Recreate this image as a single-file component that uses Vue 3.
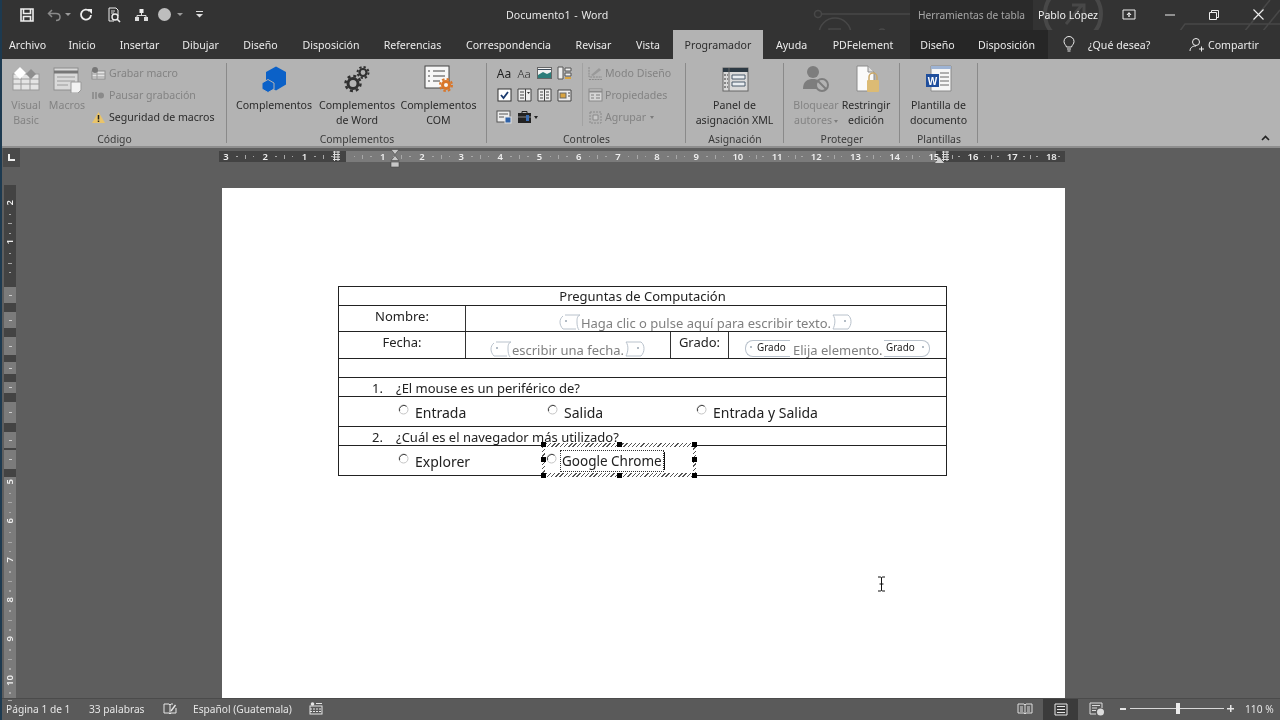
<template>
  <div class="word">
    <!-- shared shapes -->
    <svg class="defs" width="0" height="0">
      <symbol id="tag-left" viewBox="0 0 24 18">
        <path d="M8 2H23C20 3 20 6 20 9s.5 6 2 8M6 3C2 6 2 12 6 16H19" fill="none" stroke="#b9c2cc" stroke-width="1" />
        <circle cx="9" cy="8" r="1" fill="#9aa6b2" />
      </symbol>
      <symbol id="tag-right" viewBox="0 0 24 18">
        <path d="M2 2H17C21 5 21 12 17 16H2C4 12 5 6 2 2Z" fill="none" stroke="#b9c2cc" stroke-width="1" />
        <circle cx="14" cy="8" r="1" fill="#9aa6b2" />
      </symbol>
      <symbol id="radio" viewBox="0 0 11 11">
        <circle cx="5.5" cy="5.5" r="4.5" fill="#fff" stroke="#c4c4c4" />
        <path d="M1.6 7.2A4.5 4.5 0 0 1 8.6 2.3" fill="none" stroke="#444" />
      </symbol>
    </svg>

    <header class="titlebar">
      <svg class="circuit" width="1280" height="59" viewBox="0 0 1280 59">
        <g fill="none" stroke="#484848" stroke-width="1.5">
          <circle cx="818" cy="14" r="3.5" />
          <path d="M822 14H910" />
          <circle cx="835" cy="34" r="16" />
          <path d="M829 40V29H841" />
          <circle cx="882" cy="32" r="3" />
          <path d="M885 32H910" />
          <circle cx="1073" cy="14" r="28" stroke-width="4" />
          <path d="M1066 24L1082 5M1072 5H1084V16" stroke-width="3" />
          <path d="M1160 58L1185 24H1280M1222 59L1270 0M1240 59L1280 10" />
        </g>
      </svg>
      <div class="qat">
        <svg width="14" height="14" viewBox="0 0 14 14"><path d="M1 1H13V13H1Z M3.5 1V5.5H10.5V1 M3.5 13V8.5H10.5V13" fill="none" stroke="#eee" stroke-width="1.6" /></svg>
        <svg class="q-undo" width="15" height="14" viewBox="0 0 15 14"><path d="M5 2L1.5 5.5 5 9M2 5.5H9C12 5.5 13 7.5 13 9S12 12.5 9 12.5" fill="none" stroke="#8a8a8a" stroke-width="1.5" /></svg>
        <span class="q-arrow"></span>
        <svg class="q-redo" width="14" height="14" viewBox="0 0 14 14"><path d="M10.5 3A5 5 0 1 0 12 7" fill="none" stroke="#eee" stroke-width="1.8" /><path d="M8 1H13V6Z" fill="#eee" /></svg>
        <svg class="q-prev" width="14" height="16" viewBox="0 0 14 16"><path d="M2 1H9L11 3V9M2 1V14H7" fill="none" stroke="#eee" /><circle cx="8" cy="10" r="3" fill="none" stroke="#eee" stroke-width="1.4" /><path d="M10 12L13 15" stroke="#eee" stroke-width="1.6" /><path d="M4 4H8M4 6H7" stroke="#ddd" /></svg>
        <svg class="q-tree" width="15" height="14" viewBox="0 0 15 14"><path d="M7.5 4V7M3 10V7.5H12V10" fill="none" stroke="#ddd" /><rect x="5.5" y="1" width="4" height="4" fill="#eee" /><rect x="1" y="9" width="4" height="4" fill="#ddd" /><rect x="10" y="9" width="4" height="4" fill="#ddd" /></svg>
        <span class="q-dot"></span>
        <span class="q-arrow"></span>
        <svg class="q-more" width="7" height="7" viewBox="0 0 7 7"><path d="M0 .5H7" stroke="#ddd" /><path d="M0 3H7L3.5 6.5Z" fill="#ddd" /></svg>
      </div>
      <div class="doc-title">Documento1 - Word</div>
      <div class="tools-label">Herramientas de tabla</div>
      <div class="user">Pablo López</div>
      <svg class="win-display" width="14" height="11" viewBox="0 0 14 11"><path d="M1 1H13V10H1Z" fill="none" stroke="#eee" /><path d="M7 3L4.5 6H9.5ZM6.3 5.5H7.7V8H6.3Z" fill="#eee" /></svg>
      <span class="win-btn"><svg width="10" height="10" viewBox="0 0 10 10"><path d="M0 5H10" stroke="#eee" /></svg></span>
      <span class="win-btn"><svg width="10" height="10" viewBox="0 0 10 10"><path d="M.5 2.5H7.5V9.5H.5ZM2.5 2.5V.5H9.5V7.5H7.5" fill="none" stroke="#eee" /></svg></span>
      <span class="win-btn"><svg width="11" height="11" viewBox="0 0 11 11"><path d="M.5 .5L10.5 10.5M10.5 .5L.5 10.5" stroke="#eee" stroke-width="1.1" /></svg></span>
    </header>

    <nav class="tabs">
      <span
        v-for="t in tabs"
        :key="t.name + t.w"
        class="tab"
        :class="{ active: t.active, tool: t.tool }"
        :style="{ width: t.w + 'px' }"
      >{{ t.name }}</span>
      <span class="tell">
        <svg width="12" height="17" viewBox="0 0 12 17"><path d="M3.5 11C3 9 1 8 1 5.5a5 5 0 0 1 10 0C11 8 9 9 8.5 11ZM4 13H8M4.5 15H7.5" fill="none" stroke="#eee" /></svg>
        <span>¿Qué desea?</span>
      </span>
      <span class="share">
        <svg width="15" height="15" viewBox="0 0 15 15"><circle cx="7" cy="5" r="3.5" fill="none" stroke="#eee" /><path d="M1 14C1 11 3 9 7 9M10 12H15M12.5 9.5V14.5" fill="none" stroke="#eee" /></svg>
        <span>Compartir</span>
      </span>
    </nav>

    <section class="ribbon">
      <div class="group g-codigo">
        <div class="g-body">
          <div class="big off w-vb">
            <svg class="ic" width="30" height="26" viewBox="0 0 30 26">
              <rect x="2" y="8" width="26" height="16" fill="#e4e4e4" stroke="#9a9a9a" />
              <path d="M2 13H28M2 18H28M10 8V24M19 8V24" stroke="#9a9a9a" />
              <path d="M9 1L15 7 9 13 3 7Z" fill="#fff" />
              <path d="M20 3L25 8 20 13 15 8Z" fill="#8e8e8e" />
            </svg>
            <span>Visual</span><span>Basic</span>
          </div>
          <div class="big off w-mac">
            <svg class="ic" width="30" height="26" viewBox="0 0 30 26">
              <rect x="2" y="2" width="24" height="22" fill="#d9d9d9" stroke="#8e8e8e" />
              <path d="M2 6H26" stroke="#777" stroke-width="3" />
              <path d="M5 11H23M5 15H23M5 19H16" stroke="#9a9a9a" />
              <path d="M19 16H29V24L26 27H19Z" fill="#f2f2f2" stroke="#999" />
            </svg>
            <span>Macros</span>
          </div>
          <div class="small-col">
            <div class="small off">
              <svg width="15" height="13" viewBox="0 0 15 13"><rect x="1" y="4" width="13" height="8" fill="#e4e4e4" stroke="#8e8e8e" /><path d="M1 7H14M1 10H14M6 4V12" stroke="#999" /><circle cx="4" cy="3" r="3" fill="#777" /></svg>
              <span>Grabar macro</span>
            </div>
            <div class="small off">
              <svg width="15" height="13" viewBox="0 0 15 13"><path d="M2 3V10M5 3V10" stroke="#8a8a8a" stroke-width="1.6" /><circle cx="10" cy="6.5" r="3" fill="#8a8a8a" /></svg>
              <span>Pausar grabación</span>
            </div>
            <div class="small">
              <svg width="15" height="13" viewBox="0 0 15 13"><path d="M7.5 1L14 12H1Z" fill="#e9c46a" /><path d="M7.5 4V8.5M7.5 9.5V11" stroke="#222" stroke-width="1.5" /></svg>
              <span>Seguridad de macros</span>
            </div>
          </div>
        </div>
        <div class="g-label">Código</div>
      </div>

      <div class="group g-compl">
        <div class="g-body">
          <div class="big w-c1">
            <svg class="ic" width="28" height="27" viewBox="0 0 28 27">
              <path d="M16 1L26 6.5V19L16 25 6 19V6.5Z" fill="#0b61c8" />
              <path d="M8 14L14 17.5V23.5L8 27 2 23.5V17.5Z" fill="#0b61c8" stroke="#b3b3b3" />
            </svg>
            <span>Complementos</span>
          </div>
          <div class="big w-c2">
            <svg class="ic" width="28" height="27" viewBox="0 0 28 27">
              <g fill="none" stroke="#303030">
                <circle cx="10" cy="18" r="5" stroke-width="3" />
                <circle cx="10" cy="18" r="7.5" stroke-width="2.5" stroke-dasharray="3 2.9" />
                <circle cx="20" cy="7" r="3.5" stroke-width="2.2" />
                <circle cx="20" cy="7" r="5.5" stroke-width="2" stroke-dasharray="2.3 2" />
              </g>
            </svg>
            <span>Complementos</span><span>de Word</span>
          </div>
          <div class="big w-c3">
            <svg class="ic" width="30" height="28" viewBox="0 0 30 28">
              <rect x="1" y="1" width="24" height="22" fill="#f7f7f7" stroke="#444" />
              <path d="M4 6H6M9 6H21M4 11H6M9 11H21M4 16H6M9 16H16" stroke="#444" stroke-width="1.2" />
              <circle cx="22" cy="20" r="3.5" fill="none" stroke="#d9762a" stroke-width="3" />
              <circle cx="22" cy="20" r="6" fill="none" stroke="#d9762a" stroke-width="2" stroke-dasharray="2.5 2.2" />
            </svg>
            <span>Complementos</span><span>COM</span>
          </div>
        </div>
        <div class="g-label">Complementos</div>
      </div>

      <div class="group g-ctrl">
        <div class="g-body">
          <div class="ctrl-grid">
            <span class="aa">Aa</span>
            <span class="aa thin">Aa</span>
            <svg width="15" height="12" viewBox="0 0 15 12"><rect x=".5" y=".5" width="14" height="11" fill="#f2f2f2" stroke="#666" /><path d="M1 8L6 5 10 7 14 5V11H1Z" fill="#2c7d7a" /><path d="M1 2.5H14" stroke="#3b4b5a" /></svg>
            <svg width="15" height="14" viewBox="0 0 15 14"><path d="M1 1H6V13H1ZM8 2H14V5H8ZM8 7H14V10H8Z" fill="#eee" stroke="#555" /><path d="M8 11H14V13H8Z" fill="#d9a441" /></svg>
            <svg width="15" height="14" viewBox="0 0 15 14"><rect x="1" y="1" width="13" height="12" fill="#fff" stroke="#333" /><path d="M4 7L6.5 10 11 4" fill="none" stroke="#1b3b6f" stroke-width="1.8" /></svg>
            <svg width="15" height="14" viewBox="0 0 15 14"><path d="M1 1H14V13H1Z" fill="#eee" stroke="#444" /><path d="M3 4H7M3 7H7M3 10H7M8.5 1V13" stroke="#444" /><path d="M10 4H13L11.5 6Z" fill="#333" /></svg>
            <svg width="15" height="14" viewBox="0 0 15 14"><path d="M1 1H14V13H1Z" fill="#eee" stroke="#444" /><path d="M3 4H6M3 7H6M3 10H6M9 4H12M9 7H12M9 10H12M7.5 1V13" stroke="#444" /></svg>
            <svg width="15" height="14" viewBox="0 0 15 14"><path d="M1 2H14V13H1Z" fill="#eee" stroke="#444" /><rect x="3" y="5" width="6" height="5" fill="#d9a441" stroke="#666" /><path d="M11 5H13M11 8H13" stroke="#444" /></svg>
            <svg width="16" height="14" viewBox="0 0 16 14"><rect x="1" y="1" width="13" height="11" fill="#eee" stroke="#555" /><path d="M3 4H12M3 7H8" stroke="#555" /><rect x="9" y="7" width="6" height="6" fill="#2f62a8" stroke="#e4e4e4" /></svg>
            <svg width="15" height="14" viewBox="0 0 15 14"><path d="M5 3V1.5H10V3" fill="none" stroke="#222" /><rect x="1" y="3" width="13" height="10" fill="#222" /><path d="M1 7H14" stroke="#888" /><rect x="9" y="5" width="3" height="6" fill="#3a6db3" /></svg>
            <span class="drop-arrow"></span>
          </div>
          <div class="small-col ctrl-side">
            <div class="small off">
              <svg width="15" height="15" viewBox="0 0 15 15"><path d="M1 1V11H14M1 13.5H14" fill="none" stroke="#8a8a8a" stroke-dasharray="2 .8" /><path d="M3 9L11 2 13 4 5 10Z" fill="#999" /></svg>
              <span>Modo Diseño</span>
            </div>
            <div class="small off">
              <svg width="15" height="14" viewBox="0 0 15 14"><rect x="1" y="1" width="13" height="12" fill="#d6d6d6" stroke="#8a8a8a" /><path d="M1 3.5H14" stroke="#8a8a8a" stroke-width="2" /><path d="M3 7H6M3 10H6M8 7H12M8 10H12" stroke="#7d7d7d" /></svg>
              <span>Propiedades</span>
            </div>
            <div class="small off">
              <svg width="15" height="15" viewBox="0 0 15 15"><path d="M2 2H13V13H2Z" fill="none" stroke="#8a8a8a" stroke-dasharray="2 1" /><path d="M5 5H10V10H5Z" fill="#c8c8c8" stroke="#8a8a8a" /></svg>
              <span>Agrupar</span><span class="drop-arrow off-arrow"></span>
            </div>
          </div>
        </div>
        <div class="g-label">Controles</div>
      </div>

      <div class="group g-xml">
        <div class="g-body">
          <div class="big w-xml">
            <svg class="ic" width="28" height="26" viewBox="0 0 28 26">
              <rect x="2" y="2" width="25" height="23" fill="#d9d9d9" stroke="#666" />
              <path d="M2 4H27" stroke="#2d3a44" stroke-width="4" />
              <path d="M8 2V25" stroke="#666" />
              <path d="M3 9H7M3 13H7M3 17H7M3 21H7" stroke="#333" stroke-dasharray="2 1" />
              <path d="M11 9H24V13H11ZM11 16H24V20H11Z" fill="#e9edf1" stroke="#4a5a6a" />
            </svg>
            <span>Panel de</span><span>asignación XML</span>
          </div>
        </div>
        <div class="g-label">Asignación</div>
      </div>

      <div class="group g-prot">
        <div class="g-body">
          <div class="big off w-p1">
            <svg class="ic" width="30" height="28" viewBox="0 0 30 28">
              <circle cx="12" cy="7" r="6" fill="#7d7d7d" />
              <path d="M2 24C2 16 7 14 12 14S20 16 20 20L16 24Z" fill="#7d7d7d" />
              <circle cx="21" cy="20" r="6" fill="#b3b3b3" stroke="#7d7d7d" stroke-width="2" />
              <path d="M17 16L25 24" stroke="#7d7d7d" stroke-width="2" />
            </svg>
            <span>Bloquear</span><span>autores<i class="drop-arrow off-arrow"></i></span>
          </div>
          <div class="big w-p2">
            <svg class="ic" width="28" height="28" viewBox="0 0 28 28">
              <path d="M5 1H16L22 7V26H5Z" fill="#fafafa" stroke="#8a8a8a" />
              <path d="M16 1V7H22" fill="#ddd" stroke="#8a8a8a" />
              <path d="M17 15V12A4 4 0 0 1 25 12V15" fill="none" stroke="#caa868" stroke-width="1.5" />
              <rect x="15" y="15" width="12" height="12" rx="1" fill="#dcbb74" />
            </svg>
            <span>Restringir</span><span>edición</span>
          </div>
        </div>
        <div class="g-label">Proteger</div>
      </div>

      <div class="group g-plant">
        <div class="g-body">
          <div class="big w-pl">
            <svg class="ic" width="28" height="28" viewBox="0 0 28 28">
              <path d="M6 1H26V26H6Z" fill="#f5f5f5" stroke="#8a8a8a" />
              <path d="M6 1H26V4H6Z" fill="#9db3d4" />
              <path d="M15 8H24M15 12H24M15 16H24M15 20H24" stroke="#666" />
              <rect x="1" y="9" width="13" height="13" fill="#1f4e9c" />
              <text x="7.5" y="19.5" class="w-letter">W</text>
            </svg>
            <span>Plantilla de</span><span>documento</span>
          </div>
        </div>
        <div class="g-label">Plantillas</div>
      </div>

      <div class="ribbon-end">
        <svg width="9" height="6" viewBox="0 0 9 6"><path d="M1 5L4.5 1.5 8 5" fill="none" stroke="#222" stroke-width="1.6" /></svg>
      </div>
    </section>

    <main class="workspace">
      <div class="hruler-row">
        <div class="tab-box"><span class="tab-l"></span></div>
        <div class="hruler">
          <div v-for="(n, i) in hnums" :key="i" class="hcell">
            <b>{{ n }}</b><i></i><u></u><i></i>
          </div>
          <svg class="margin-mark left-mark" width="7" height="10" viewBox="0 0 7 10"><path d="M0 1H7M0 3.5H7M0 6H7M0 8.5H7M1.5 0V10M5 0V10" stroke="#ddd" /></svg>
          <svg class="margin-mark right-mark" width="7" height="10" viewBox="0 0 7 10"><path d="M0 1H7M0 3.5H7M0 6H7M0 8.5H7M1.5 0V10M5 0V10" stroke="#ddd" /></svg>
          <svg class="indent" width="10" height="19" viewBox="0 0 10 19"><path d="M1 .5H9L5 5.5ZM5 6.5L9 11.5H1Z" fill="#c8c8c8" stroke="#444" stroke-width=".6" /><rect x="1" y="13" width="8" height="5" fill="#c8c8c8" stroke="#444" stroke-width=".6" /></svg>
          <svg class="indent-r" width="9" height="6" viewBox="0 0 9 6"><path d="M4.5 0L9 6H0Z" fill="#d0d0d0" /></svg>
        </div>
      </div>

      <div class="doc-row">
        <div class="vruler">
          <div
            v-for="(s, i) in vsegs"
            :key="i"
            class="vseg"
            :class="{ light: s.light, numbered: s.nums }"
            :style="{ height: s.h + 'px' }"
          >
            <template v-if="s.nums">
              <div v-for="n in s.nums" :key="n" class="vcell">
                <b>{{ n }}</b><i></i><u></u><i></i>
              </div>
            </template>
            <u v-else-if="s.light"></u>
          </div>
        </div>

        <div class="page">
          <div class="table">
            <div class="row r18 center">Preguntas de Computación</div>
            <div class="row r26">
              <div class="cell label-cell">Nombre:</div>
              <div class="cell ph-cell">
                <svg class="tag"><use href="#tag-left" /></svg>
                <span class="ph">Haga clic o pulse aquí para escribir texto.</span>
                <svg class="tag"><use href="#tag-right" /></svg>
              </div>
            </div>
            <div class="row r27">
              <div class="cell label-cell">Fecha:</div>
              <div class="cell ph-cell date-cell">
                <svg class="tag"><use href="#tag-left" /></svg>
                <span class="ph">escribir una fecha.</span>
                <svg class="tag"><use href="#tag-right" /></svg>
              </div>
              <div class="cell label-cell grade-label">Grado:</div>
              <div class="cell ph-cell grade-cell">
                <span class="gtag left"><em>Grado</em></span>
                <span class="ph">Elija elemento.</span>
                <span class="gtag right"><em>Grado</em></span>
              </div>
            </div>
            <div class="row r19"></div>
            <div class="row r19 question"><span class="num">1.</span>¿El mouse es un periférico de?</div>
            <div class="row r30 options">
              <div class="opt"><svg class="radio"><use href="#radio" /></svg><span>Entrada</span></div>
              <div class="opt"><svg class="radio"><use href="#radio" /></svg><span>Salida</span></div>
              <div class="opt"><svg class="radio"><use href="#radio" /></svg><span>Entrada y Salida</span></div>
            </div>
            <div class="row r19 question"><span class="num">2.</span>¿Cuál es el navegador más utilizado?</div>
            <div class="row r30 options">
              <div class="opt"><svg class="radio"><use href="#radio" /></svg><span>Explorer</span></div>
            </div>

            <div class="selected">
              <div class="sel-inner">
                <svg class="radio"><use href="#radio" /></svg>
                <span class="sel-text">Google Chrome</span>
                <span class="caret"></span>
              </div>
              <span v-for="h in handles" :key="h" class="handle" :class="h"></span>
            </div>
          </div>
        </div>
      </div>

      <svg class="ibeam" width="9" height="16" viewBox="0 0 9 16"><path d="M1 1H3.5C4 1 4.5 1.5 4.5 2V14C4.5 14.5 4 15 3.5 15H1M8 1H5.5C5 1 4.5 1.5 4.5 2M4.5 14C4.5 14.5 5 15 5.5 15H8M2.5 8H6.5" fill="none" stroke="#111" /></svg>
    </main>

    <footer class="status">
      <span class="st-page">Página 1 de 1</span>
      <span class="st-words">33 palabras</span>
      <svg class="st-book" width="14" height="12" viewBox="0 0 14 12"><path d="M1 1H6L7 2V11L6 10H1ZM7 2L8 1H10M13 5V10H8L7 11" fill="none" stroke="#e6e6e6" /><path d="M8 8L12.5 2" stroke="#e6e6e6" stroke-width="1.4" /></svg>
      <span class="st-lang">Español (Guatemala)</span>
      <svg class="st-cal" width="14" height="13" viewBox="0 0 14 13"><rect x="1" y="4" width="12" height="8" fill="none" stroke="#e6e6e6" /><path d="M1 7H13M1 9.5H13" stroke="#e6e6e6" stroke-dasharray="2 1" /><circle cx="3.5" cy="2" r="1.8" fill="#e6e6e6" /><path d="M7 1.5H13" stroke="#e6e6e6" /></svg>
      <span class="st-spacer"></span>
      <svg class="st-read" width="16" height="13" viewBox="0 0 16 13"><path d="M1 2H7L8 3 9 2H15V11H9L8 12 7 11H1ZM8 3V12M3 5H6M3 7H6M3 9H6M10 5H13M10 7H13M10 9H13" fill="none" stroke="#dcdcdc" /></svg>
      <span class="st-active">
        <svg width="14" height="13" viewBox="0 0 14 13"><path d="M1 1H13V12H1ZM3 3.5H11M3 6.5H11M3 9.5H11" fill="none" stroke="#e6e6e6" /></svg>
      </span>
      <svg class="st-web" width="16" height="14" viewBox="0 0 16 14"><path d="M1 1H13V6M1 1V12H7M3 3.5H11M3 6H8M3 8.5H7" fill="none" stroke="#dcdcdc" /><circle cx="11.5" cy="10" r="3.5" fill="#dcdcdc" /></svg>
      <span class="zoom-minus"></span>
      <span class="slider"><span class="thumb"></span></span>
      <span class="zoom-plus"></span>
      <span class="st-zoom">110 %</span>
    </footer>
  </div>
</template>

<script setup>
const tabs = [
  { name: 'Archivo', w: 55 },
  { name: 'Inicio', w: 54 },
  { name: 'Insertar', w: 61 },
  { name: 'Dibujar', w: 61 },
  { name: 'Diseño', w: 59 },
  { name: 'Disposición', w: 82 },
  { name: 'Referencias', w: 81 },
  { name: 'Correspondencia', w: 111 },
  { name: 'Revisar', w: 59 },
  { name: 'Vista', w: 50 },
  { name: 'Programador', w: 90, active: true },
  { name: 'Ayuda', w: 57 },
  { name: 'PDFelement', w: 86 },
  { name: '', w: 4 },
  { name: 'Diseño', w: 55, tool: true },
  { name: 'Disposición', w: 83, tool: true }
]

const hnums = [3, 2, 1, '', 1, 2, 3, 4, 5, 6, 7, 8, 9, 10, 11, 12, 13, 14, 15, 16, 17, 18]

const vsegs = [
  { h: 102, nums: [2, 1] },
  { h: 16, light: true },
  { h: 9 },
  { h: 16, light: true },
  { h: 9 },
  { h: 18, light: true },
  { h: 7 },
  { h: 12, light: true },
  { h: 8 },
  { h: 11, light: true },
  { h: 9 },
  { h: 21, light: true },
  { h: 9 },
  { h: 16, light: true },
  { h: 2 },
  { h: 19, light: true },
  { h: 8 },
  { h: 221, light: true, nums: [5, 6, 7, 8, 9, 10] }
]

const handles = ['tl', 'tc', 'tr', 'ml', 'mr', 'bl', 'bc', 'br']
</script>

<style>
html, body {
  margin: 0;
  overflow: hidden;
  background: #5e5e5e;
}
</style>

<style scoped>
.word {
  position: relative;
  display: flex;
  flex-direction: column;
  width: 1280px;
  height: 720px;
  overflow: hidden;
  font-family: "Noto Sans", "Open Sans", sans-serif;
  font-size: 10.6px;
  color: #2b2b2b;
  background: #5e5e5e;
  filter: blur(0.3px);
}

.word::before {
  content: "";
  position: absolute;
  left: 0;
  top: 0;
  bottom: 0;
  width: 2px;
  background: #1d3a50;
  z-index: 5;
}

.defs {
  position: absolute;
}

/* title bar */
.titlebar {
  position: relative;
  display: flex;
  align-items: center;
  height: 30px;
  padding-bottom: 1px;
  box-sizing: border-box;
  background: #333;
  color: #e8e8e8;
  flex: none;
}

.circuit {
  position: absolute;
  left: 0;
  top: 0;
}

.qat {
  position: relative;
  display: flex;
  align-items: center;
  width: 486px;
  padding-left: 20px;
}

.q-undo { margin-left: 13px; }
.q-redo { margin-left: 8px; }
.q-prev { margin-left: 14px; }
.q-tree { margin-left: 13px; }

.q-arrow {
  width: 0;
  height: 0;
  margin-left: 3px;
  border-left: 3px solid transparent;
  border-right: 3px solid transparent;
  border-top: 3px solid #9a9a9a;
}

.q-dot {
  width: 13px;
  height: 13px;
  margin-left: 9px;
  border-radius: 50%;
  background: #bdbdbd;
}

.q-dot + .q-arrow {
  margin-left: 6px;
}

.q-more {
  margin-left: 13px;
  flex: none;
}

.doc-title {
  position: relative;
  width: 404px;
  word-spacing: 1px;
}

.tools-label {
  position: relative;
  align-self: stretch;
  width: 123px;
  margin-bottom: -1px;
  padding-left: 8px;
  box-sizing: border-box;
  line-height: 30px;
  background: #2a2a2a;
  color: #a6a6a6;
  font-size: 10.2px;
  white-space: nowrap;
  overflow: hidden;
}

.user {
  position: relative;
  width: 88px;
  padding-left: 5px;
  box-sizing: border-box;
  color: #f0f0f0;
  white-space: nowrap;
}

.win-display {
  position: relative;
  margin: 0 12px 0 1px;
}

.win-btn {
  position: relative;
  display: flex;
  justify-content: center;
  width: 44px;
}

/* tabs */
.tabs {
  position: relative;
  display: flex;
  align-items: stretch;
  height: 29px;
  background: #333;
  color: #ececec;
  flex: none;
}

.tab {
  display: flex;
  align-items: center;
  justify-content: center;
  flex: none;
  white-space: nowrap;
  position: relative;
}

.tab.active {
  background: #b3b3b3;
  color: #2b2b2b;
}

.tab.tool {
  background: #262626;
}

.tell {
  position: relative;
  display: flex;
  align-items: center;
  gap: 13px;
  width: 126px;
  margin-left: 15px;
  flex: none;
}

.share {
  position: relative;
  display: flex;
  align-items: center;
  gap: 4px;
}

/* ribbon */
.ribbon {
  display: flex;
  height: 89px;
  padding: 4px 0 3px 3px;
  box-sizing: border-box;
  background: #b3b3b3;
  border-bottom: 2px solid #8e8e8e;
  flex: none;
}

.group {
  display: flex;
  flex-direction: column;
  align-items: stretch;
  box-sizing: border-box;
  border-right: 1px solid #8a8a8a;
  margin-right: 1px;
  flex: none;
}

.g-codigo { width: 224px; }
.g-compl { width: 259px; }
.g-ctrl { width: 198px; }
.g-xml { width: 97px; }
.g-prot { width: 115px; }
.g-plant { width: 77px; }

.g-body {
  display: flex;
  flex: 1;
  min-height: 0;
}

.g-label {
  height: 14px;
  margin-bottom: -3px;
  line-height: 14px;
  text-align: center;
  font-size: 10.4px;
  color: #3a3a3a;
}

.big {
  display: flex;
  flex-direction: column;
  align-items: center;
  flex: none;
  padding-top: 2px;
  line-height: 15px;
  white-space: nowrap;
}

.big .ic {
  height: 28px;
  margin-bottom: 5px;
  flex: none;
}

.off,
.off span {
  color: #838383;
}

.w-vb { width: 46px; }
.w-mac { width: 36px; }
.w-c1 { width: 84px; margin-left: 4px; }
.w-c2 { width: 82px; }
.w-c3 { width: 81px; }
.w-xml { width: 95px; }
.w-p1 { width: 58px; margin-left: 2px; }
.w-p2 { width: 42px; }
.w-pl { width: 75px; }

.small-col {
  display: flex;
  flex-direction: column;
  gap: 4px;
  margin-left: 6px;
  padding-top: 1px;
}

.small {
  display: flex;
  align-items: center;
  gap: 3px;
  height: 18px;
  white-space: nowrap;
}

.small svg {
  flex: none;
}

.ctrl-grid {
  display: grid;
  grid-template-columns: repeat(4, 20px);
  grid-auto-rows: 22px;
  align-items: center;
  justify-items: center;
  width: 80px;
  margin: -1px 0 0 6px;
}

.ctrl-grid .drop-arrow {
  justify-self: start;
}

.aa {
  font-size: 12px;
  color: #222;
}

.aa.thin {
  font-weight: 300;
  font-size: 11.5px;
}

.ctrl-side {
  margin-left: 8px;
  padding-left: 5px;
  height: 62px;
  border-left: 1px solid #a2a2a2;
}

.ctrl-side .small {
  gap: 2px;
}

.drop-arrow {
  display: inline-block;
  width: 0;
  height: 0;
  border-left: 2.5px solid transparent;
  border-right: 2.5px solid transparent;
  border-top: 3px solid #222;
  vertical-align: middle;
}

.off-arrow {
  margin-left: 2px;
  border-top-color: #7c7c7c;
}

.w-letter {
  font-family: "Liberation Sans", sans-serif;
  font-size: 10px;
  font-weight: 700;
  fill: #fff;
  text-anchor: middle;
}

.ribbon-end {
  display: flex;
  flex: 1;
  justify-content: flex-end;
  align-items: flex-end;
  padding: 0 10px 2px 0;
}

/* workspace */
.workspace {
  position: relative;
  display: flex;
  flex-direction: column;
  flex: 1;
  min-height: 0;
  background: #5e5e5e;
}

.hruler-row {
  display: flex;
  align-items: flex-start;
  height: 37px;
  padding-left: 3px;
  box-sizing: border-box;
  flex: none;
}

.tab-box {
  display: flex;
  align-items: center;
  justify-content: center;
  width: 17px;
  height: 19px;
  background: #4a4a4a;
}

.tab-l {
  width: 5px;
  height: 5px;
  border-left: 2px solid #eee;
  border-bottom: 2px solid #eee;
}

.hruler {
  position: relative;
  display: flex;
  width: 846px;
  height: 11px;
  margin: 3px 0 0 199px;
  padding-left: 4px;
  box-sizing: border-box;
  background: linear-gradient(to right, #434343 0 127px, #7b7b7b 127px 717px, #434343 717px);
}

.hcell {
  display: flex;
  align-items: center;
  justify-content: space-between;
  flex: none;
  width: 39.2px;
  padding-right: 8px;
  box-sizing: border-box;
  color: #efefef;
}

.hcell:last-of-type {
  width: 17px;
  padding-right: 3px;
}

.hcell:last-of-type u,
.hcell:last-of-type i:last-of-type {
  display: none;
}

.hcell b {
  min-width: 6px;
  font-size: 9.5px;
  font-weight: 600;
  line-height: 11px;
  text-align: center;
}

.hcell i {
  width: 1.5px;
  height: 1.5px;
  background: #a8a8a8;
}

.hcell u {
  width: 1px;
  height: 4px;
  background: #a8a8a8;
}

.margin-mark {
  position: absolute;
  top: 0;
}

.left-mark { left: 114px; }
.right-mark { left: 723px; }

.indent {
  position: absolute;
  left: 171px;
  top: -2px;
}

.indent-r {
  position: absolute;
  left: 716px;
  top: 6px;
}

.doc-row {
  display: flex;
  flex: 1;
  min-height: 0;
  align-items: flex-start;
}

.vruler {
  display: flex;
  flex-direction: column;
  flex: none;
  width: 12px;
  margin-left: 4px;
  background: #434343;
}

.vseg {
  flex: none;
  display: flex;
  flex-direction: column;
  align-items: center;
  justify-content: center;
  background: #434343;
}

.vseg.light {
  background: #7b7b7b;
}

.vseg.numbered {
  justify-content: flex-start;
  padding-top: 2px;
  box-sizing: border-box;
}

.vseg > u {
  width: 3px;
  height: 1px;
  background: #ccc;
}

.vseg:first-child {
  padding-top: 15px;
  box-sizing: border-box;
}

.vcell {
  display: flex;
  flex-direction: column;
  align-items: center;
  justify-content: space-between;
  flex: none;
  width: 100%;
  height: 39.2px;
  padding-bottom: 5px;
  box-sizing: border-box;
}

.vcell b {
  writing-mode: vertical-rl;
  transform: rotate(180deg);
  font-size: 9.5px;
  font-weight: 600;
  line-height: 12px;
  color: #efefef;
}

.vcell i {
  width: 1.5px;
  height: 1.5px;
  background: #a8a8a8;
}

.vcell u {
  width: 4px;
  height: 1px;
  background: #a8a8a8;
}

.page {
  width: 843px;
  height: 510px;
  margin: 3px 0 0 206px;
  padding: 98px 0 0 116px;
  box-sizing: border-box;
  background: #fff;
  flex: none;
}

.table {
  position: relative;
  width: 609px;
  box-sizing: border-box;
  border: 1px solid #222;
  font-size: 13px;
  color: #222;
}

.row {
  display: flex;
  box-sizing: border-box;
  border-top: 1px solid #222;
}

.row:first-child {
  border-top: 0;
}

.r18 { height: 18px; }
.r19 { height: 19px; }
.r26 { height: 26px; }
.r27 { height: 27px; }
.r30 { height: 30px; }

.center {
  justify-content: center;
  align-items: center;
}

.cell {
  display: flex;
  box-sizing: border-box;
  border-right: 1px solid #333;
}

.cell:last-child {
  border-right: 0;
}

.label-cell {
  justify-content: center;
  width: 127px;
  flex: none;
  padding-top: 1px;
}

.ph-cell {
  flex: 1;
  justify-content: center;
  align-items: flex-end;
  min-width: 0;
}

.date-cell {
  flex: none;
  width: 205px;
}

.grade-label {
  width: 58px;
}

.grade-cell {
  justify-content: flex-start;
  padding-left: 16px;
}

.ph {
  color: #808080;
  white-space: nowrap;
  line-height: 16px;
}

.tag {
  width: 24px;
  height: 18px;
  flex: none;
}

.gtag {
  position: relative;
  display: flex;
  align-items: flex-start;
  flex: none;
  height: 17px;
  margin-bottom: 1px;
  box-sizing: border-box;
  border: 1px solid #b9c2cc;
  font-size: 11px;
  line-height: 12px;
}

.gtag em {
  font-style: normal;
  color: #222;
  transform: scaleX(0.9);
  transform-origin: left center;
}

.gtag.left {
  width: 45px;
  padding-left: 11px;
  border-radius: 8px 0 0 8px;
  border-right: 0;
  margin-right: 3px;
}

.gtag.right {
  width: 46px;
  padding-left: 2px;
  border-radius: 0 8px 8px 0;
  border-left: 0;
  margin-left: 1px;
}

.gtag::after {
  content: "";
  position: absolute;
  top: 5px;
  width: 2px;
  height: 2px;
  border-radius: 50%;
  background: #9aa6b2;
}

.gtag.left::after { left: 4px; }
.gtag.right::after { right: 5px; }

.question {
  align-items: center;
  padding: 1px 0 0 33px;
}

.num {
  width: 24px;
  flex: none;
}

.options {
  padding-left: 59px;
}

.opt {
  display: flex;
  align-items: flex-start;
  gap: 6px;
  width: 149px;
  flex: none;
  padding-top: 6px;
  font-size: 14px;
  line-height: 20px;
  white-space: nowrap;
}

.radio {
  width: 11px;
  height: 11px;
  margin-top: 1px;
  flex: none;
}

.selected {
  position: absolute;
  left: 203px;
  top: 156px;
  width: 154px;
  height: 34px;
  box-sizing: border-box;
  padding: 4px 3px;
  background: repeating-linear-gradient(135deg, #555 0 1px, #fff 1px 3px);
}

.sel-inner {
  display: flex;
  align-items: center;
  height: 100%;
  padding-left: 1px;
  background: #fff;
  font-size: 13.5px;
}

.sel-inner .radio {
  margin: -4px 3px 0 0;
}

.sel-text {
  height: 20px;
  margin-top: 2px;
  line-height: 20px;
  padding: 0 1px;
  border: 1px dotted #333;
  white-space: nowrap;
}

.caret {
  width: 1px;
  height: 18px;
  margin-top: 2px;
  background: #111;
}

.handle {
  position: absolute;
  width: 5px;
  height: 5px;
  background: #000;
}

.tl { left: -1px; top: -1px; }
.tc { left: 75px; top: -1px; }
.tr { right: -1px; top: -1px; }
.ml { left: -1px; top: 14px; }
.mr { right: -1px; top: 14px; }
.bl { left: -1px; bottom: -1px; }
.bc { left: 75px; bottom: -1px; }
.br { right: -1px; bottom: -1px; }

.ibeam {
  position: absolute;
  left: 877px;
  top: 428px;
}

/* status bar */
.status {
  display: flex;
  align-items: center;
  height: 22px;
  padding-bottom: 2px;
  background: #5a5a5a;
  border-top: 1px solid #4b4b4b;
  box-sizing: border-box;
  color: #e6e6e6;
  font-size: 10.2px;
  flex: none;
  white-space: nowrap;
}

.st-page { margin-left: 6px; width: 83px; }
.st-words { width: 74px; }
.st-book { width: 14px; }
.st-lang { margin-left: 16px; width: 116px; }
.st-cal { flex: none; }
.st-spacer { flex: 1; }
.st-read { flex: none; }

.st-active {
  display: flex;
  align-items: center;
  justify-content: center;
  align-self: stretch;
  width: 35px;
  margin: 0 0 -2px 10px;
  background: #3b3b3b;
}

.st-web {
  margin-left: 11px;
  flex: none;
}

.zoom-minus {
  width: 6px;
  height: 2px;
  margin-left: 15px;
  background: #e6e6e6;
}

.slider {
  position: relative;
  width: 94px;
  height: 1px;
  margin-left: 4px;
  background: #d8d8d8;
}

.thumb {
  position: absolute;
  left: 46px;
  top: -5px;
  width: 4px;
  height: 11px;
  background: #ececec;
}

.zoom-plus {
  position: relative;
  width: 7px;
  height: 7px;
  margin-left: 3px;
  background:
    linear-gradient(#e6e6e6, #e6e6e6) center / 7px 1.5px no-repeat,
    linear-gradient(#e6e6e6, #e6e6e6) center / 1.5px 7px no-repeat;
}

.st-zoom {
  width: 35px;
  margin-left: 11px;
  flex: none;
}
</style>
